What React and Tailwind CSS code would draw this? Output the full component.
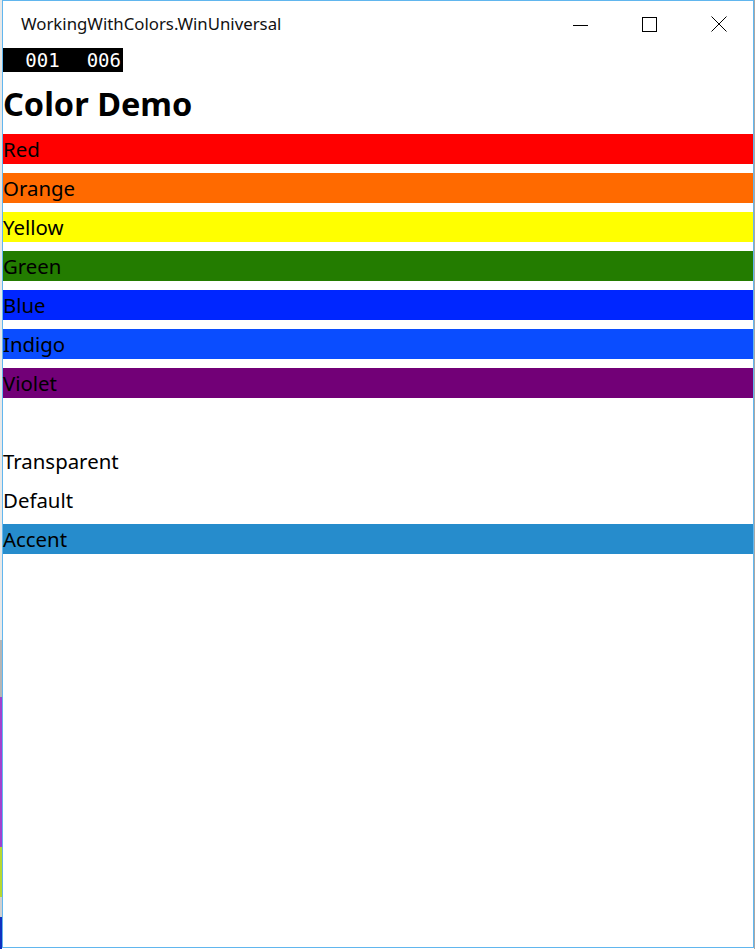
export default function App() {
  const rows = [
    { label: "Red", bg: "bg-[#ff0000]" },
    { label: "Orange", bg: "bg-[#ff6a00]" },
    { label: "Yellow", bg: "bg-[#ffff00]" },
    { label: "Green", bg: "bg-[#237c00]" },
    { label: "Blue", bg: "bg-[#0026ff]" },
    { label: "Indigo", bg: "bg-[#0a4dff]" },
    { label: "Violet", bg: "bg-[#720077]" },
    { label: "", bg: "bg-transparent" },
    { label: "Transparent", bg: "bg-transparent" },
    { label: "Default", bg: "bg-transparent" },
    { label: "Accent", bg: "bg-[#268ccc]" },
  ];
  return (
    <div className="w-[755px] h-[949px] bg-[#ffffff] flex overflow-hidden" style={{ fontFamily: '"Noto Sans", "Open Sans", sans-serif' }}>
      <div className="w-[2px] h-full flex flex-col bg-[#d9d9d9]">
        <div className="h-[640px] bg-[#e8e8e8]" />
        <div className="h-[57px] bg-[#b5b5b5]" />
        <div className="h-[150px] bg-[#a040d0]" />
        <div className="h-[50px] bg-[#b8d830]" />
        <div className="h-[20px] bg-[#d0d0d0]" />
        <div className="flex-1 bg-[#1030c0]" />
      </div>
      <div className="w-[752px] h-[948px] border border-[#61b6ee] flex flex-col bg-white">
        <div className="h-[47px] flex items-start shrink-0">
          <div className="pl-[18px] pt-[12px] text-[16.8px] leading-[22px] text-[#111]" style={{ fontFamily: '"Noto Sans", sans-serif' }}>
            WorkingWithColors.WinUniversal
          </div>
          <div className="ml-auto flex h-[46px]">
            <div className="w-[69px] flex items-center justify-center">
              <svg width="15" height="15" viewBox="0 0 15 15"><line x1="0" y1="8.5" x2="15" y2="8.5" stroke="#000" strokeWidth="1" /></svg>
            </div>
            <div className="w-[69px] flex items-center justify-center">
              <svg width="15" height="15" viewBox="0 0 15 15"><rect x="0.5" y="0.5" width="14" height="14" fill="none" stroke="#000" strokeWidth="1" /></svg>
            </div>
            <div className="w-[69px] flex items-center justify-center">
              <svg width="16" height="16" viewBox="0 0 16 16"><line x1="0.5" y1="0.5" x2="15.5" y2="15.5" stroke="#000" strokeWidth="1" /><line x1="15.5" y1="0.5" x2="0.5" y2="15.5" stroke="#000" strokeWidth="1" /></svg>
            </div>
          </div>
        </div>
        <div className="w-[120px] h-[24px] bg-black flex items-center justify-end gap-[27px] pr-[2px] text-white text-[19px] leading-[24px] shrink-0" style={{ fontFamily: '"DejaVu Sans Mono", monospace' }}>
          <span>001</span>
          <span>006</span>
        </div>
        <div className="h-[62px] pt-[11px] text-[32.5px] leading-[42px] font-bold text-black shrink-0">Color Demo</div>
        <div className="flex flex-col gap-[9px]">
          {rows.map((r, i) => (
            <div key={i} className={`h-[30px] ${r.bg} pt-[1px] text-[20.4px] leading-[29px] text-black`}>
              {r.label}
            </div>
          ))}
        </div>
      </div>
      <div className="w-[1px] h-full bg-[#a8a8a8]" />
    </div>
  );
}
